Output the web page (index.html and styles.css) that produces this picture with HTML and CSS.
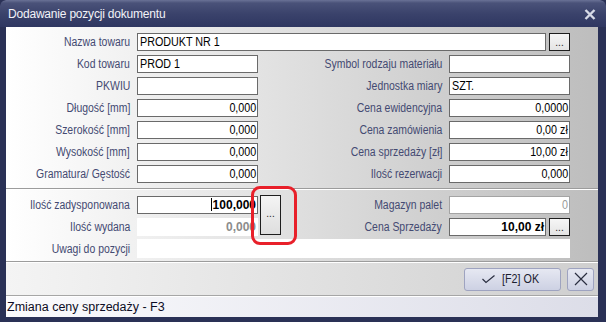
FILE: index.html
```
<!DOCTYPE html>
<html lang="pl">
<head>
    <meta charset="UTF-8">
    <title>Dodawanie pozycji dokumentu</title>
    <link rel="stylesheet" href="styles.css">
</head>
<body>
    <div class="window">
        <div class="titlebar">
            <span class="title">Dodawanie pozycji dokumentu</span>
            <svg class="title-close" width="12" height="11" viewBox="0 0 12 11">
                <path d="M1.5 1 L10.5 10 M10.5 1 L1.5 10" stroke="#d6dae6" stroke-width="2.4" fill="none"/>
            </svg>
        </div>
        <div class="client">
            <!-- towar -->
            <div class="form form-top">
                <label><span>Nazwa towaru</span></label>
                <div class="wide">
                    <div class="field"><span>PRODUKT NR 1</span></div>
                    <div class="dots">...</div>
                </div>

                <label><span>Kod towaru</span></label>
                <div class="field"><span>PROD 1</span></div>
                <label><span>Symbol rodzaju materiału</span></label>
                <div class="field"></div>

                <label><span>PKWIU</span></label>
                <div class="field"></div>
                <label><span>Jednostka miary</span></label>
                <div class="field"><span>SZT.</span></div>

                <label><span>Długość [mm]</span></label>
                <div class="field num"><span>0,000</span></div>
                <label><span>Cena ewidencyjna</span></label>
                <div class="field num"><span>0,0000</span></div>

                <label><span>Szerokość [mm]</span></label>
                <div class="field num"><span>0,000</span></div>
                <label><span>Cena zamówienia</span></label>
                <div class="field num"><span>0,00 zł</span></div>

                <label><span>Wysokość [mm]</span></label>
                <div class="field num"><span>0,000</span></div>
                <label><span>Cena sprzedaży [zł]</span></label>
                <div class="field num"><span>10,00 zł</span></div>

                <label><span>Gramatura/ Gęstość</span></label>
                <div class="field num"><span>0,000</span></div>
                <label><span>Ilość rezerwacji</span></label>
                <div class="field num"><span>0,000</span></div>
            </div>

            <!-- ilosci -->
            <div class="form form-bottom">
                <label class="r1"><span>Ilość zadysponowana</span></label>
                <div class="field num bold r1"><i class="caret"></i>100,000</div>
                <div class="big-dots">
                    ...
                    <div class="highlight"></div>
                </div>
                <label class="r1 c3"><span>Magazyn palet</span></label>
                <div class="field num disabled r1 c4"><span>0</span></div>

                <label class="r2"><span>Ilość wydana</span></label>
                <div class="field num bold plain r2">0,000</div>
                <label class="r2 c3"><span>Cena Sprzedaży</span></label>
                <div class="wide-right r2 c4">
                    <div class="field num bold">10,00 zł</div>
                    <div class="dots">...</div>
                </div>

                <label class="r3"><span>Uwagi do pozycji</span></label>
                <div class="field plain notes r3"></div>
            </div>

            <div class="buttons">
                <div class="btn btn-ok">
                    <svg width="13" height="9" viewBox="0 0 13 9">
                        <path d="M0.5 4 L4 7.5 L12.5 0.5" stroke="#2a2e40" stroke-width="1.2" fill="none"/>
                    </svg>
                    <span>[F2] OK</span>
                </div>
                <div class="btn btn-cancel">
                    <svg width="14" height="14" viewBox="0 0 14 14">
                        <path d="M1 1 L13 13 M13 1 L1 13" stroke="#2a2e40" stroke-width="1.2" fill="none"/>
                    </svg>
                </div>
            </div>

            <div class="status">Zmiana ceny sprzedaży - F3</div>
        </div>
    </div>
</body>
</html>
```

FILE: styles.css
```
/* okno */
body {
    margin: 0;
    padding: 0;
    background-color: #2a3156;
    font-family: "Liberation Sans", Arial, sans-serif;
    font-size: 12px;
}
.window {
    width: 606px;
    height: 322px;
    background-color: #2a3156;
    border-radius: 6px 6px 0 0;
    overflow: hidden;
    box-sizing: border-box;
    padding: 0 8px 7px 6px;
    display: flex;
    flex-direction: column;
}
.titlebar {
    flex-shrink: 0;
    height: 27px;
    margin: 0 -8px 0 -6px;
    padding: 0 10px 0 8px;
    display: flex;
    align-items: center;
    justify-content: space-between;
    background: linear-gradient(#6a7296 0, #4a5279 3px, #3a426b 14px, #2f3761 27px);
    border-radius: 6px 6px 0 0;
}
.title {
    color: #f2f3f8;
    font-size: 12px;
    letter-spacing: -0.2px;
    padding-top: 1px;
}
.title-close {
    margin-top: 1px;
}
.client {
    flex: 1;
    display: flex;
    flex-direction: column;
    background-color: #d8d8d8;
}

/* formularz */
.form {
    flex-shrink: 0;
    display: grid;
    grid-template-columns: 127px 121px 183px 121px;
    grid-auto-rows: 18px;
    column-gap: 4px;
    row-gap: 4px;
    background: linear-gradient(to right, #ffffff, #bdbdbd);
    color: #444a72;
    font-size: 12px;
}
.form-top {
    padding: 6px 0 5px 0;
    border-bottom: 1px solid #9c9c9c;
}
.form-bottom {
    padding: 6px 0 3px 0;
    border-top: 1px solid #ffffff;
    border-bottom: 1px solid #9c9c9c;
}
.form label {
    text-align: right;
    line-height: 18px;
    white-space: nowrap;
    padding-right: 3px;
}
/* waska czcionka jak w oryginale */
.form label span {
    display: inline-block;
    transform: scaleX(0.87);
    transform-origin: right center;
}
.r1 { grid-row: 1; }
.r2 { grid-row: 2; }
.r3 { grid-row: 3; }
.c3 { grid-column: 3; }
.c4 { grid-column: 4; }

.field {
    background-color: #fff;
    border: 1px solid #6a6a6a;
    box-sizing: border-box;
    height: 18px;
    line-height: 16px;
    padding: 0 2px;
    color: #000;
    font-size: 12.5px;
    white-space: nowrap;
    overflow: hidden;
}
.field span {
    display: inline-block;
    transform: scaleX(0.86);
    transform-origin: left center;
}
.num {
    text-align: right;
    padding-right: 1px;
}
.num span {
    transform-origin: right center;
}
.bold {
    font-weight: bold;
    font-size: 12px;
}
.plain {
    border-color: #fff;
}
.bold.plain {
    color: #8c8c8c;
}
.disabled {
    border-color: #a4a4a4;
    color: #9a9a9a;
}
.caret {
    display: inline-block;
    width: 0;
    height: 13px;
    border-left: 1px solid #000;
    vertical-align: -2px;
    margin-right: 1px;
}
.wide {
    grid-column: 2 / 5;
    display: flex;
    gap: 3px;
}
.wide .field {
    flex: 1;
}
.wide-right {
    display: flex;
    gap: 3px;
}
.wide-right .field {
    flex: 1;
}
.dots {
    width: 21px;
    height: 18px;
    box-sizing: border-box;
    border: 1px solid #1e1e1e;
    background: linear-gradient(#f6f6f6, #e4e4e4);
    color: #222;
    text-align: center;
    line-height: 18px;
    font-size: 10px;
}
.big-dots {
    grid-row: 1 / 3;
    grid-column: 3;
    position: relative;
    z-index: 1;
    margin-left: -2px;
    margin-top: -1px;
    width: 21px;
    height: 40px;
    box-sizing: border-box;
    border: 1px solid #1e1e1e;
    background: linear-gradient(#f4f4f4, #dedede);
    text-align: center;
    line-height: 36px;
    font-size: 10px;
    color: #222;
}
.highlight {
    position: absolute;
    left: -10px;
    top: -10px;
    right: -17px;
    bottom: -11px;
    border: 3px solid #e8202a;
    border-radius: 9px;
}
.notes {
    grid-column: 2 / 5;
    height: 19px;
    margin-top: -1px;
}

/* przyciski */
.buttons {
    flex-shrink: 0;
    height: 32px;
    display: flex;
    justify-content: flex-end;
    align-items: center;
    gap: 6px;
    padding: 0 4px 0 0;
    border-top: 1px solid #ffffff;
    border-bottom: 1px solid #a6a6a6;
    background: linear-gradient(to right, #f4f4f4, #cfcfcf);
}
.btn {
    height: 23px;
    box-sizing: border-box;
    border: 1px solid #9ea3c0;
    border-radius: 3px;
    background: linear-gradient(#e6e8f2, #cdd1e3);
    display: flex;
    align-items: center;
    justify-content: center;
    color: #1c2030;
    font-size: 12.5px;
}
.btn-ok {
    width: 97px;
    gap: 4px;
}
.btn-ok span {
    display: inline-block;
    transform: scaleX(0.86);
}
.btn-cancel {
    width: 27px;
}

.status {
    flex: 1;
    padding-left: 1px;
    line-height: 20px;
    color: #0c0c24;
    font-size: 12.5px;
    border-top: 1px solid #fff;
    background: linear-gradient(to right, #fbfbfd, #dcdde8);
}
```
